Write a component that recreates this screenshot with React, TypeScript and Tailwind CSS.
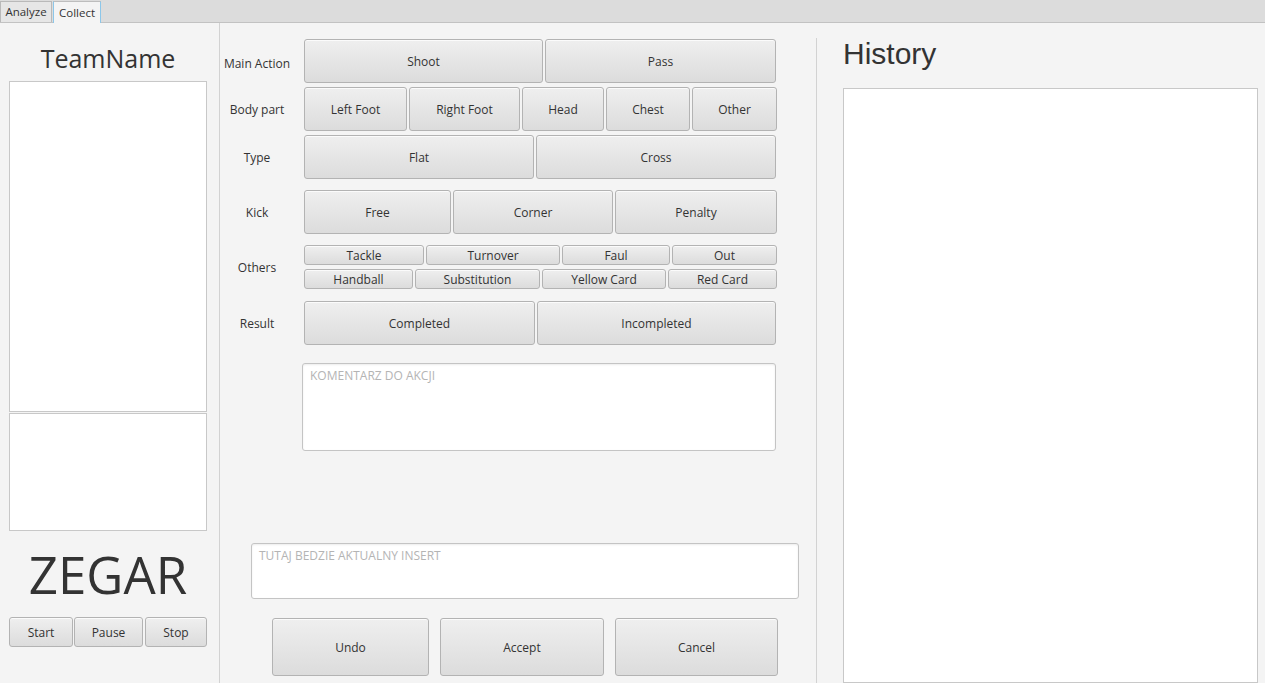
import React from 'react';

const font = { fontFamily: '"Open Sans", "Noto Sans", sans-serif' };

type BtnProps = { label: string; w: string; h: string };

const Btn: React.FC<BtnProps> = ({ label, w, h }) => (
  <button
    className={`${w} ${h} shrink-0 flex items-center justify-center pt-[2px] rounded-[3px] border border-[#b3b3b3] bg-linear-to-b from-[#efefef] to-[#dcdcdc] text-[12px] text-[#333] shadow-[inset_0_1px_0_#fbfbfb]`}
  >
    {label}
  </button>
);

const Label: React.FC<{ text: string; extra?: string }> = ({ text, extra = 'pt-[2px]' }) => (
  <div className={`w-[74px] mr-[8px] shrink-0 text-center text-[12px] text-[#333] ${extra}`}>{text}</div>
);

const App: React.FC = () => {
  return (
    <div className="w-full h-[683px] overflow-hidden flex flex-col bg-[#f4f4f4]" style={font}>
      {/* Tabs */}
      <div className="h-[23px] shrink-0 flex items-end bg-[#dcdcdc] border-b border-[#c2c2c2]">
        <div className="w-[52px] h-[21px] flex items-center justify-center bg-[#e6e6e6] border border-b-0 border-[#b9b9b9] text-[11.5px] text-[#333]">
          Analyze
        </div>
        <div className="w-[48px] h-[22px] ml-[1px] -mb-px flex items-center justify-center bg-[#f4f4f4] border border-b-0 border-[#8cc7ea] border-t-[#bdbdbd] text-[11.5px] text-[#333]">
          Collect
        </div>
      </div>

      <div className="flex flex-1 min-h-0">
        {/* Left panel */}
        <div className="w-[220px] shrink-0 border-r border-[#d2d2d2] pl-[9px] pr-[12px] flex flex-col">
          <div className="h-[58px] pt-[13px] flex items-center justify-center text-[25px] text-[#333]">
            TeamName
          </div>
          <div className="h-[331px] bg-white border border-[#c8c8c8]" />
          <div className="h-[118px] mt-[1px] bg-white border border-[#c8c8c8]" />
          <div className="h-[86px] flex items-center justify-center text-[51px] leading-none text-[#333]">
            ZEGAR
          </div>
          <div className="flex">
            <Btn label="Start" w="w-[64px]" h="h-[30px]" />
            <div className="w-[1px]" />
            <Btn label="Pause" w="w-[69px]" h="h-[30px]" />
            <div className="w-[2px]" />
            <Btn label="Stop" w="w-[62px]" h="h-[30px]" />
          </div>
        </div>

        {/* Middle panel */}
        <div className="w-[596px] shrink-0 flex flex-col pt-[16px]">
          <div className="flex items-center gap-[2px]">
            <Label text="Main Action" extra="pt-[6px]" />
            <Btn label="Shoot" w="w-[239px]" h="h-[44px]" />
            <Btn label="Pass" w="w-[231px]" h="h-[44px]" />
          </div>
          <div className="flex items-center gap-[2px] mt-[4px]">
            <Label text="Body part" />
            <Btn label="Left Foot" w="w-[103px]" h="h-[44px]" />
            <Btn label="Right Foot" w="w-[111px]" h="h-[44px]" />
            <Btn label="Head" w="w-[82px]" h="h-[44px]" />
            <Btn label="Chest" w="w-[84px]" h="h-[44px]" />
            <Btn label="Other" w="w-[85px]" h="h-[44px]" />
          </div>
          <div className="flex items-center gap-[2px] mt-[4px]">
            <Label text="Type" />
            <Btn label="Flat" w="w-[230px]" h="h-[44px]" />
            <Btn label="Cross" w="w-[240px]" h="h-[44px]" />
          </div>
          <div className="flex items-center gap-[2px] mt-[11px]">
            <Label text="Kick" />
            <Btn label="Free" w="w-[147px]" h="h-[44px]" />
            <Btn label="Corner" w="w-[160px]" h="h-[44px]" />
            <Btn label="Penalty" w="w-[162px]" h="h-[44px]" />
          </div>
          <div className="flex items-center gap-[2px] mt-[11px]">
            <Label text="Others" />
            <div className="flex flex-col gap-[4px]">
              <div className="flex gap-[2px]">
                <Btn label="Tackle" w="w-[120px]" h="h-[20px]" />
                <Btn label="Turnover" w="w-[134px]" h="h-[20px]" />
                <Btn label="Faul" w="w-[108px]" h="h-[20px]" />
                <Btn label="Out" w="w-[105px]" h="h-[20px]" />
              </div>
              <div className="flex gap-[2px]">
                <Btn label="Handball" w="w-[109px]" h="h-[20px]" />
                <Btn label="Substitution" w="w-[125px]" h="h-[20px]" />
                <Btn label="Yellow Card" w="w-[124px]" h="h-[20px]" />
                <Btn label="Red Card" w="w-[109px]" h="h-[20px]" />
              </div>
            </div>
          </div>
          <div className="flex items-center gap-[2px] mt-[12px]">
            <Label text="Result" />
            <Btn label="Completed" w="w-[231px]" h="h-[44px]" />
            <Btn label="Incompleted" w="w-[239px]" h="h-[44px]" />
          </div>

          <div className="ml-[82px] mt-[18px] w-[474px] h-[88px] bg-white border border-[#c4c4c4] rounded-[3px] shadow-[inset_0_1px_2px_rgba(0,0,0,0.08)] px-[7px] py-[3px] text-[12px] text-[#b4b4b4]">
            KOMENTARZ DO AKCJI
          </div>

          <div className="ml-[31px] mt-[92px] w-[548px] h-[56px] bg-white border border-[#c4c4c4] rounded-[3px] shadow-[inset_0_1px_2px_rgba(0,0,0,0.08)] px-[7px] py-[3px] text-[12px] text-[#b4b4b4]">
            TUTAJ BEDZIE AKTUALNY INSERT
          </div>

          <div className="flex ml-[52px] mt-[19px] gap-[11px]">
            <Btn label="Undo" w="w-[157px]" h="h-[58px]" />
            <Btn label="Accept" w="w-[164px]" h="h-[58px]" />
            <Btn label="Cancel" w="w-[163px]" h="h-[58px]" />
          </div>
        </div>

        {/* Right panel */}
        <div className="flex-1 mt-[15px] border-l border-[#d2d2d2] pl-[26px] pr-[7px] flex flex-col">
          <div
            className="h-[50px] text-[30px] text-[#333] leading-[32px]"
            style={{ fontFamily: '"Liberation Sans", Arial, sans-serif' }}
          >
            History
          </div>
          <div className="flex-1 bg-white border border-[#c8c8c8]" />
        </div>
      </div>
    </div>
  );
};

export default App;
